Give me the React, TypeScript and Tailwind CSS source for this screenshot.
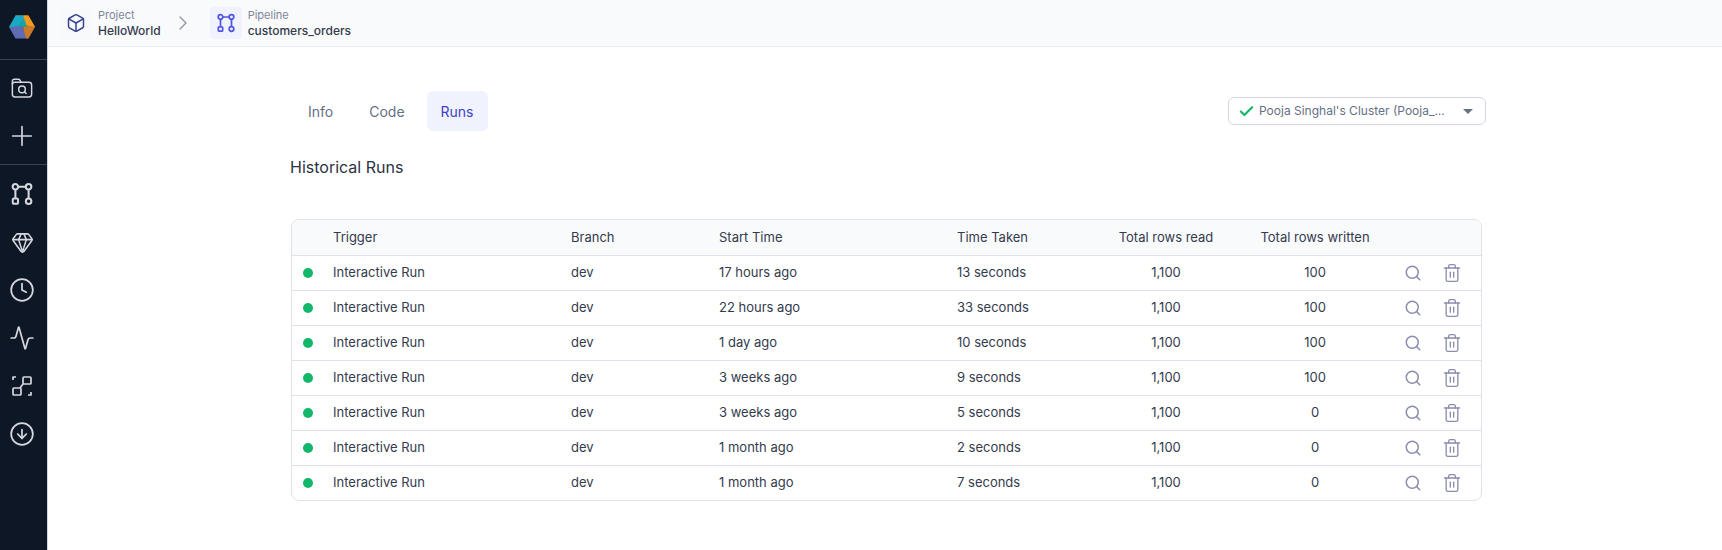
import { Activity, Box, ChevronRight, CircleArrowDown, Clock, Gem, Plus, Search, Trash2, Check } from "lucide-react";

const runs = [
  { start: "17 hours ago", taken: "13 seconds", written: "100" },
  { start: "22 hours ago", taken: "33 seconds", written: "100" },
  { start: "1 day ago", taken: "10 seconds", written: "100" },
  { start: "3 weeks ago", taken: "9 seconds", written: "100" },
  { start: "3 weeks ago", taken: "5 seconds", written: "0" },
  { start: "1 month ago", taken: "2 seconds", written: "0" },
  { start: "1 month ago", taken: "7 seconds", written: "0" },
];

function PipelineIcon({ className }: { className?: string }) {
  return (
    <svg viewBox="0 0 20 20" fill="none" stroke="currentColor" strokeWidth="1.7" className={className}>
      <circle cx="4.5" cy="4" r="2.3" />
      <circle cx="15.5" cy="4" r="2.3" />
      <circle cx="15.5" cy="16" r="2.3" />
      <rect x="2.3" y="13.8" width="4.4" height="4.4" rx="1" />
      <path d="M6.8 4h6.4M4.5 6.3v7.5M15.5 6.3v7.4" />
    </svg>
  );
}

function DatasetIcon({ className }: { className?: string }) {
  return (
    <svg viewBox="0 0 24 24" fill="none" stroke="currentColor" strokeWidth="1.7" strokeLinejoin="round" className={className}>
      <path d="M3 6V3h3M21 18v3h-3" />
      <rect x="13" y="3" width="8" height="7" rx="1" />
      <rect x="3" y="14" width="8" height="7" rx="1" />
      <path d="M13 10l-3 4" />
    </svg>
  );
}

function FolderIcon({ className }: { className?: string }) {
  return (
    <svg viewBox="0 0 24 24" fill="none" stroke="currentColor" strokeWidth="1.6" strokeLinecap="round" strokeLinejoin="round" className={className}>
      <path d="M1.5 10V4.5a2 2 0 0 1 2-2H8a2 2 0 0 1 1.7 1L11 5.8h8.5a3 3 0 0 1 3 3v10a3 3 0 0 1-3 3h-15a3 3 0 0 1-3-3V10" />
      <path d="M1.5 8a2.5 2.5 0 0 1 2.5-2.3h7" />
      <circle cx="12" cy="13.5" r="3.6" />
      <path d="M14.6 16.2l1.9 1.9" />
    </svg>
  );
}

function Logo() {
  return (
    <svg viewBox="0 0 26 24" className="h-[24px] w-[26px]">
      <path d="M6.5 0.5H19.5L26 12 L13 9Z" fill="#f7941d" />
      <path d="M6.5 0.5H15L13 14 L0 12Z" fill="#1ba8c4" />
      <path d="M15 .5 L19 .5 L26 12 L14 11Z" fill="#f59a1c" />
      <path d="M0 12L13 11L19 23.5H6.5Z" fill="#5f6bb5" />
      <path d="M13 9L26 12L19.5 23.5H17Z" fill="#c9792a" />
      <path d="M9 11L15 3L18 12Z" fill="#12a3a8" />
    </svg>
  );
}

function SidebarIcon({ children }: { children: React.ReactNode }) {
  return <div className="flex h-[48px] items-center justify-center pr-[3px] text-[#d5d8df]">{children}</div>;
}

function Sidebar() {
  return (
    <aside className="flex w-[48px] shrink-0 flex-col border-r border-[#cfd4de] bg-[#0e1726]">
      <div className="flex h-[60px] items-center justify-center border-b border-[#3b4350] pb-[5px] pr-[3px]">
        <Logo />
      </div>
      <div className="flex h-[105px] flex-col justify-center border-b border-[#3b4350]">
        <SidebarIcon><FolderIcon className="h-[22px] w-[22px]" /></SidebarIcon>
        <SidebarIcon><Plus size={32} strokeWidth={1.25} /></SidebarIcon>
      </div>
      <div className="flex flex-col pt-[5px]">
        <SidebarIcon><PipelineIcon className="h-[24px] w-[24px]" /></SidebarIcon>
        <SidebarIcon><Gem size={23} strokeWidth={1.6} /></SidebarIcon>
        <SidebarIcon><Clock size={26} strokeWidth={1.6} /></SidebarIcon>
        <SidebarIcon><Activity size={26} strokeWidth={1.6} /></SidebarIcon>
        <SidebarIcon><DatasetIcon className="h-[24px] w-[24px]" /></SidebarIcon>
        <SidebarIcon><CircleArrowDown size={26} strokeWidth={1.6} /></SidebarIcon>
      </div>
    </aside>
  );
}

function Crumb({ label, value, active, children }: { label: string; value: string; active?: boolean; children: React.ReactNode }) {
  return (
    <div className="flex items-center gap-[6px]">
      <div className={`flex h-[32px] w-[32px] items-center justify-center rounded-[4px] ${active ? "bg-[#f0f2fe]" : "bg-[#f8f9fc]"}`}>
        {children}
      </div>
      <div className="flex flex-col">
        <span className="text-[11px] leading-[16px] text-[#7d8598]">{label}</span>
        <span className="text-[12px] font-medium leading-[16px] text-[#343b4c]">{value}</span>
      </div>
    </div>
  );
}

function Header() {
  return (
    <header className="flex h-[47px] items-center border-b border-[#e8ebf1] bg-[#f9fafc] pl-[12px]">
      <Crumb label="Project" value="HelloWorld">
        <Box size={20} strokeWidth={1.8} className="text-[#37418f]" />
      </Crumb>
      <ChevronRight size={24} strokeWidth={1.25} className="ml-[10px] mr-[15px] text-[#8d93a8]" />
      <Crumb label="Pipeline" value="customers_orders" active>
        <PipelineIcon className="h-[20px] w-[20px] text-[#4f55e0]" />
      </Crumb>
    </header>
  );
}

function Tabs() {
  return (
    <div className="flex items-center justify-between">
      <div className="ml-[3px] flex gap-[8px]">
        <button className="h-[40px] rounded-[6px] px-[14px] text-[14px] text-[#667085]">Info</button>
        <button className="h-[40px] rounded-[6px] px-[14px] text-[14px] text-[#667085]">Code</button>
        <button className="h-[40px] rounded-[6px] bg-[#f0f2fe] px-[14px] text-[14px] text-[#4042c4]">Runs</button>
      </div>
      <button className="flex h-[28px] w-[258px] items-center whitespace-nowrap rounded-[6px] border border-[#d3d7e2] bg-white pl-[9px] pr-[12px] text-[12px] text-[#667085]">
        <Check size={17} strokeWidth={3} className="mr-[4px] text-[#12b76a]" />
        <span className="flex-1 text-left">Pooja Singhal's Cluster (Pooja_...</span>
        <span className="h-0 w-0 border-x-[5px] border-t-[5px] border-x-transparent border-t-[#667085]" />
      </button>
    </div>
  );
}

function RunsTable() {
  return (
    <div className="mt-[40px] w-[1191px] overflow-hidden rounded-[8px] border border-[#dfe2ec] text-[13px] text-[#343b4c]">
      <div className="flex h-[35px] items-center bg-[#f9fafc]">
        <div className="w-[41px]" />
        <div className="w-[238px]">Trigger</div>
        <div className="w-[148px]">Branch</div>
        <div className="w-[238px]">Start Time</div>
        <div className="w-[139px]">Time Taken</div>
        <div className="w-[140px] text-center">Total rows read</div>
        <div className="w-[158px] text-center">Total rows written</div>
      </div>
      {runs.map((run, i) => (
        <div key={i} className="flex h-[35px] items-center border-t border-[#dfe2ec]">
          <div className="flex w-[41px] justify-center pr-[10px]">
            <span className="h-[10px] w-[10px] rounded-full bg-[#12b76a]" />
          </div>
          <div className="w-[238px]">Interactive Run</div>
          <div className="w-[148px]">dev</div>
          <div className="w-[238px]">{run.start}</div>
          <div className="w-[139px]">{run.taken}</div>
          <div className="w-[140px] text-center">1,100</div>
          <div className="w-[158px] text-center">{run.written}</div>
          <div className="flex items-center gap-[20px] pl-[10px] text-[#8a8dac]">
            <Search size={18} strokeWidth={2} />
            <Trash2 size={20} strokeWidth={1.6} />
          </div>
        </div>
      ))}
    </div>
  );
}

export default function App() {
  return (
    <div className="flex h-[550px] w-[1722px] bg-white font-['Inter',sans-serif]">
      <Sidebar />
      <div className="flex min-w-0 flex-1 flex-col">
        <Header />
        <main className="ml-[243px] w-[1195px] pt-[44px]">
          <Tabs />
          <h2 className="mt-[24px] -ml-px text-[16px] leading-[24px] text-[#2b3243]">Historical Runs</h2>
          <RunsTable />
        </main>
      </div>
    </div>
  );
}
